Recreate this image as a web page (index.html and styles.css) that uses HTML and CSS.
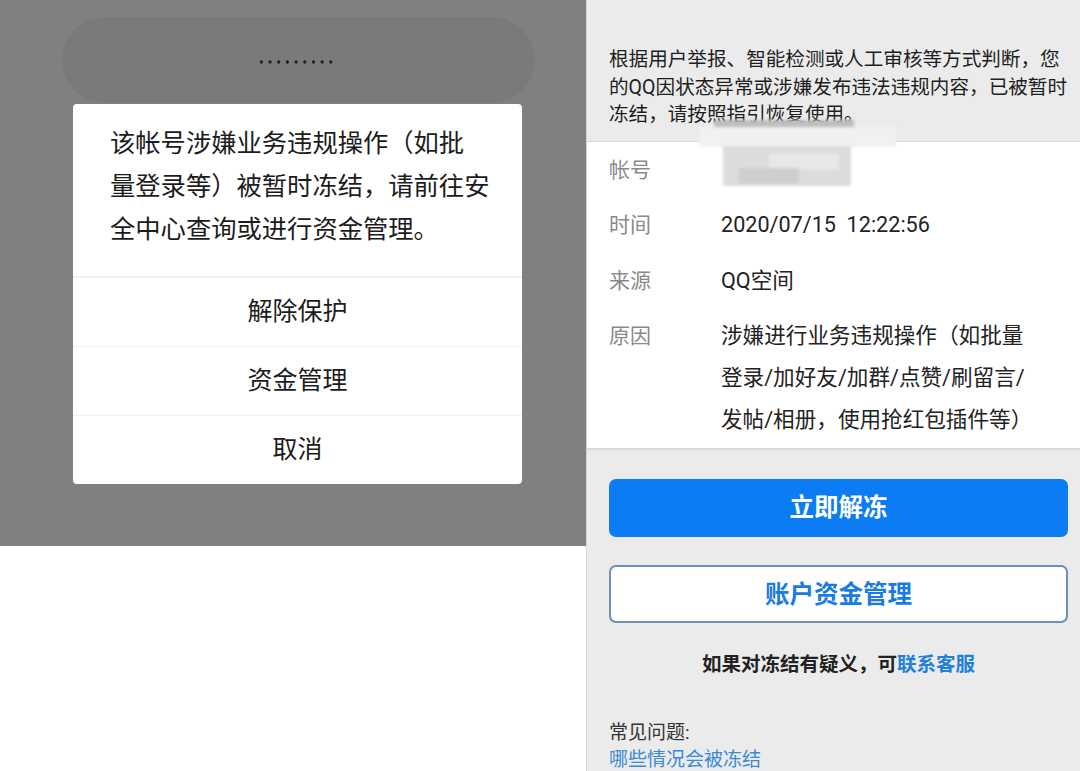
FILE: index.html
```html
<!DOCTYPE html>
<html lang="zh-CN">
<head>
    <meta charset="UTF-8">
    <meta name="viewport" content="width=device-width, initial-scale=1.0">
    <title>帐号冻结</title>
    <link rel="stylesheet" href="styles.css">
</head>
<body>
<div id="container">
  <div class="left_side">
    <div class="mask_bg">
      <div class="pwd_box">
        <div class="pwd_dots"></div>
      </div>
      <div class="dialog">
        <div class="dialog_text">该帐号涉嫌业务违规操作（如批<br>量登录等）被暂时冻结，请前往安<br>全中心查询或进行资金管理。</div>
        <div class="dialog_btn">解除保护</div>
        <div class="dialog_btn">资金管理</div>
        <div class="dialog_btn">取消</div>
      </div>
    </div>
  </div>
  <div class="right_side">
    <div class="notice">根据用户举报、智能检测或人工审核等方式判断，您<br>的QQ因状态异常或涉嫌发布违法违规内容，已被暂时<br>冻结，请按照指引恢复使用。</div>
    <div class="info">
      <div class="row">
        <div class="label">帐号</div>
        <div class="value"></div>
      </div>
      <div class="row">
        <div class="label">时间</div>
        <div class="value">2020/07/15&nbsp;&nbsp;12:22:56</div>
      </div>
      <div class="row">
        <div class="label">来源</div>
        <div class="value">QQ空间</div>
      </div>
      <div class="row">
        <div class="label">原因</div>
        <div class="value">涉嫌进行业务违规操作（如批量<br>登录/加好友/加群/点赞/刷留言/<br>发帖/相册，使用抢红包插件等）</div>
      </div>
    </div>
    <div class="actions">
      <div class="btn btn_primary">立即解冻</div>
      <div class="btn btn_outline">账户资金管理</div>
      <div class="contact">如果对冻结有疑义，可<span class="link">联系客服</span></div>
      <div class="faq">
        <div class="faq_title">常见问题:</div>
        <div class="faq_link">哪些情况会被冻结</div>
      </div>
    </div>
    <!-- 打码区域 -->
    <div class="blur_patch">
      <div class="patch p1"></div>
      <div class="patch p2"></div>
      <div class="patch p3"></div>
      <div class="patch p4"></div>
      <div class="patch p5"></div>
    </div>
  </div>
</div>
</body>
</html>
```

FILE: styles.css
```css
body, html {
  margin: 0;
  padding: 0;
}
body {
  width: 1080px;
  height: 771px;
  overflow: hidden;
  background: #fff;
  font-family: Roboto, "Noto Sans CJK SC", sans-serif;
}
#container {
  display: flex;
  width: 1080px;
  height: 771px;
}
.left_side {
  width: 586px;
  flex-shrink: 0;
  background: #fff;
}
.mask_bg {
  height: 546px;
  background: #808080;
  padding-top: 17px;
  box-sizing: border-box;
}
.pwd_box {
  width: 473px;
  height: 86px;
  margin-left: 62px;
  border-radius: 43px;
  background: #7a7a7a;
  display: flex;
  align-items: center;
  justify-content: center;
}
.pwd_dots {
  width: 80px;
  height: 4px;
  margin-left: -4px;
  margin-top: 4px;
  background: radial-gradient(circle, #1e1e1e 1.4px, transparent 1.9px) 0 0 / 8.7px 4px repeat-x;
}
.dialog {
  width: 449px;
  margin: 1px 0 0 73px;
  background: #fff;
  border-radius: 4px;
}
.dialog_text {
  padding: 18px 10px 25px 37px;
  font-size: 25.3px;
  line-height: 43px;
  color: #1c1c1c;
  white-space: nowrap;
  border-bottom: 2px solid #f2f2f2;
}
.dialog_btn {
  height: 68px;
  line-height: 68px;
  text-align: center;
  font-size: 25px;
  color: #1c1c1c;
  border-bottom: 1px solid #f0f0f0;
}
.dialog_btn:last-child {
  border-bottom: none;
}
.right_side {
  position: relative;
  flex: 1;
  background: #ebebeb;
  border-left: 1px solid #d4d4d4;
}
.notice {
  padding: 46px 0 12px 22px;
  font-size: 19.6px;
  line-height: 27.5px;
  color: #1e1e1e;
  white-space: nowrap;
  border-bottom: 1px solid #d6d6d6;
}
.info {
  background: #fff;
  padding: 7px 0 7px 22px;
  border-bottom: 2px solid #d9d9d9;
}
.row {
  display: flex;
  line-height: 42px;
  margin-bottom: 13.5px;
}
.row:last-child {
  margin-bottom: 0;
}
.label {
  width: 112px;
  font-size: 21px;
  color: #8a8a8a;
}
.value {
  font-size: 21.6px;
  color: #222;
  white-space: nowrap;
}
.actions {
  padding: 29px 12px 0 22px;
}
.btn {
  height: 58px;
  line-height: 58px;
  border-radius: 7px;
  text-align: center;
  font-size: 24.5px;
  font-weight: bold;
  box-sizing: border-box;
}
.btn_primary {
  background: #0c7cf4;
  color: #fff;
}
.btn_outline {
  margin-top: 28px;
  background: #fff;
  border: 2px solid #6f8fb3;
  line-height: 56px;
  color: #1a7be2;
}
.contact {
  margin-top: 28px;
  text-align: center;
  font-size: 19.5px;
  font-weight: bold;
  line-height: 28px;
  color: #222;
}
.link {
  color: #1f7fdc;
}
.faq {
  margin-top: 40px;
  font-size: 19px;
  line-height: 27px;
}
.faq_title {
  color: #333;
}
.faq_link {
  color: #3a8ad6;
}
.blur_patch {
  position: absolute;
  left: 112px;
  top: 118px;
  width: 200px;
  height: 70px;
  filter: blur(1.5px);
}
.patch {
  position: absolute;
}
.p1 {
  left: 15px;
  top: 2px;
  width: 140px;
  height: 12px;
  background: #bdbdbd;
}
.p2 {
  left: 0;
  top: 9px;
  width: 197px;
  height: 20px;
  background: #f1f1f1;
}
.p3 {
  left: 24px;
  top: 28px;
  width: 128px;
  height: 40px;
  background: #dcdcdc;
}
.p4 {
  left: 70px;
  top: 36px;
  width: 70px;
  height: 16px;
  background: #e8e8e8;
}
.p5 {
  left: 40px;
  top: 50px;
  width: 60px;
  height: 16px;
  background: #cfcfcf;
}
```
